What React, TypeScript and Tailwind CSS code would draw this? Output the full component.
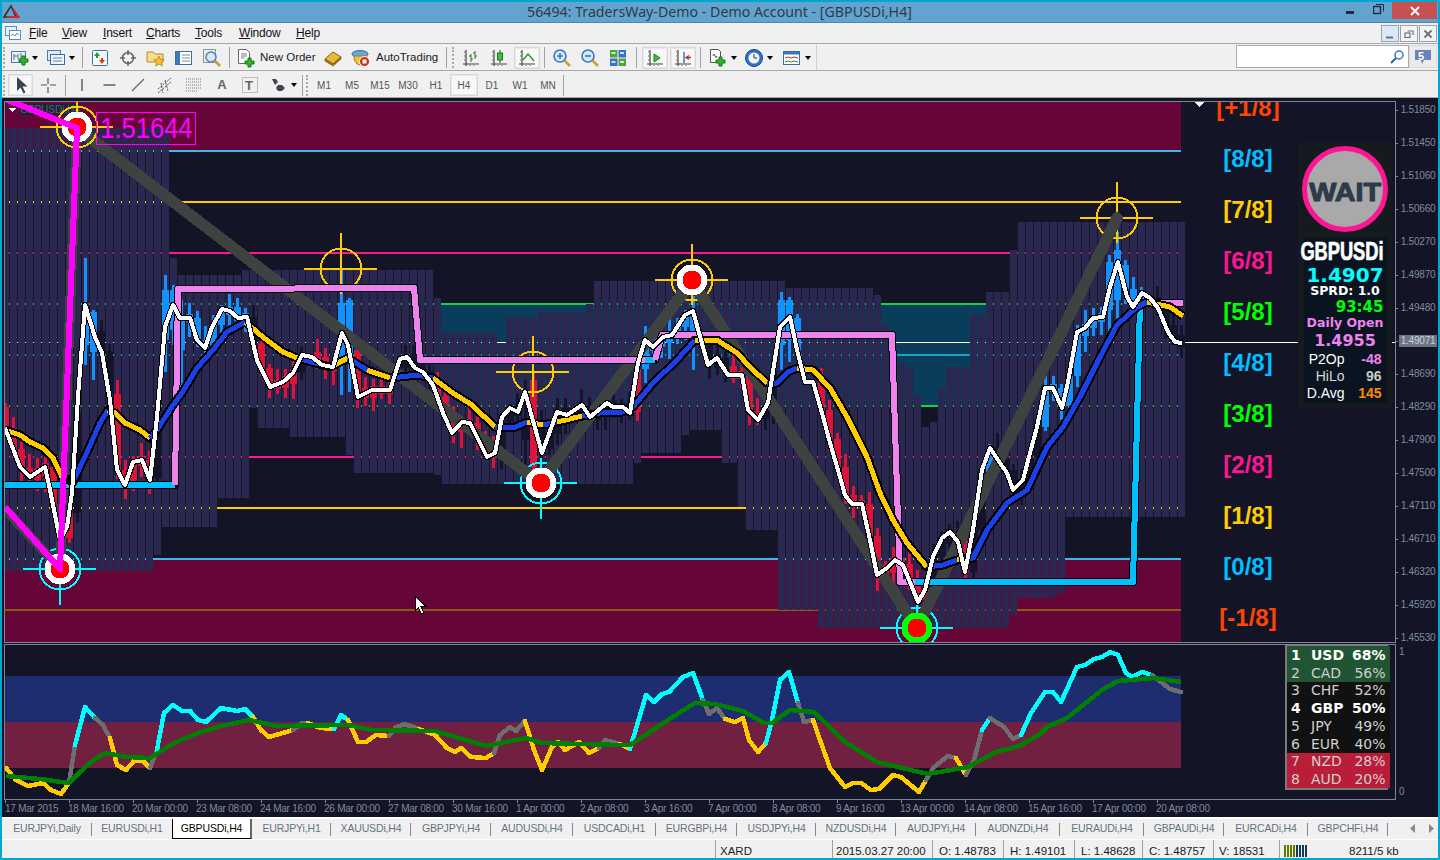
import React from "react";

type Pt = [number, number];
const pts = (a: Pt[]) => a.map((p) => p.join(",")).join(" ");

const WHITE: Pt[] = [[5,428],[20,467],[30,477],[45,467],[50,490],[60,540],[67,527],[72,493],[78,397],[85,305],[95,337],[102,353],[110,400],[117,470],[125,485],[133,462],[142,460],[150,480],[157,417],[165,327],[173,305],[180,318],[190,318],[197,340],[205,348],[212,327],[222,309],[230,311],[238,318],[247,317],[257,360],[270,387],[283,382],[293,373],[302,355],[312,357],[322,365],[333,367],[342,333],[348,345],[358,397],[372,390],[390,390],[400,359],[407,357],[415,368],[423,372],[433,385],[443,413],[452,433],[462,422],[470,423],[480,443],[487,457],[495,453],[502,417],[510,408],[518,412],[525,392],[542,453],[557,412],[567,415],[582,405],[590,417],[607,403],[613,407],[623,407],[630,413],[638,363],[645,340],[653,347],[663,337],[672,335],[685,315],[693,311],[708,365],[717,358],[728,375],[742,375],[748,410],[758,420],[768,403],[780,327],[790,317],[797,350],[805,382],[813,382],[822,413],[830,443],[838,470],[845,495],[852,504],[862,504],[870,540],[877,575],[887,568],[895,560],[903,565],[912,587],[918,602],[925,590],[933,557],[942,538],[950,532],[958,542],[965,572],[973,530],[982,470],[990,448],[1000,463],[1007,473],[1013,490],[1023,480],[1030,453],[1037,427],[1045,388],[1053,388],[1062,408],[1068,382],[1077,332],[1085,328],[1093,318],[1103,317],[1110,287],[1118,262],[1127,297],[1133,307],[1142,293],[1150,298],[1158,308],[1168,332],[1175,342],[1182,343]];

const Y = "#ffcc00", B = "#1a40e8";
const MA: { c: string; p: Pt[] }[] = [
  { c: Y, p: [[5,430],[20,435],[30,442],[43,448],[53,458],[62,477]] },
  { c: B, p: [[73,482],[88,450],[100,423],[108,410]] },
  { c: Y, p: [[108,410],[115,413],[125,423],[140,430],[150,438]] },
  { c: B, p: [[150,438],[157,430],[173,405],[182,393],[197,368],[213,350],[227,332],[245,322]] },
  { c: Y, p: [[245,322],[263,337],[283,352],[297,358]] },
  { c: B, p: [[297,358],[330,367]] },
  { c: Y, p: [[330,367],[348,358]] },
  { c: B, p: [[348,358],[367,370]] },
  { c: Y, p: [[367,370],[390,378]] },
  { c: B, p: [[390,378],[400,377],[417,375],[433,378]] },
  { c: Y, p: [[433,378],[453,393],[472,405],[495,427]] },
  { c: B, p: [[495,427],[513,428],[527,422]] },
  { c: Y, p: [[527,422],[543,425]] },
  { c: B, p: [[543,425],[557,422]] },
  { c: Y, p: [[557,422],[582,416]] },
  { c: B, p: [[582,416],[600,413],[622,412],[633,407],[653,383],[677,360],[695,340]] },
  { c: Y, p: [[695,340],[717,340],[737,353],[750,367],[767,383]] },
  { c: B, p: [[767,383],[777,383],[788,372],[797,368]] },
  { c: Y, p: [[797,368],[813,370],[830,388],[847,417],[867,457],[880,493],[893,520],[907,543],[927,567]] },
  { c: B, p: [[927,567],[943,565],[957,560]] },
  { c: Y, p: [[957,560],[962,559]] },
  { c: B, p: [[962,559],[973,558],[987,530],[1007,503],[1027,490],[1047,447],[1063,427],[1080,397],[1100,357],[1117,325],[1137,307],[1147,302]] },
  { c: Y, p: [[1147,302],[1170,307],[1183,316]] },
];

const PINK = "#ee82ee", CY = "#00bfff";
const STEPS: { c: string; p: Pt[] }[] = [
  { c: CY, p: [[5,485],[175,485]] },
  { c: PINK, p: [[175,485],[178,289],[414,288],[420,360],[655,360]] },
  { c: CY, p: [[645,360],[655,360]] },
  { c: PINK, p: [[655,360],[662,335],[892,335],[900,582],[915,582]] },
  { c: CY, p: [[915,582],[1133,582],[1140,303]] },
  { c: PINK, p: [[1140,303],[1183,303]] },
];

const TOPS: Pt[] = [[169,128],[178,258],[242,275],[433,270],[441,298],[497,332],[505,343],[538,317],[586,312],[594,304],[785,281],[873,288],[881,295],[889,325],[898,345],[905,362],[913,368],[922,395],[930,427],[938,422],[946,388],[970,367],[986,315],[1010,292],[1018,250],[1190,222]];
const BOTS: Pt[] = [[153,571],[161,555],[217,527],[249,498],[258,408],[289,428],[346,437],[353,455],[433,473],[441,475],[633,484],[641,463],[681,453],[689,435],[721,430],[737,463],[746,507],[778,530],[818,610],[1010,628],[1017,615],[1048,598],[1057,597],[1065,593],[1190,517]];
const look = (t: Pt[], c: number) => (t.find((e) => c < e[0]) || t[t.length - 1])[1];

const wAt = (x: number) => {
  for (let i = 1; i < WHITE.length; i++) {
    if (x <= WHITE[i][0]) {
      const [a, b] = WHITE[i - 1], [c, d] = WHITE[i];
      return b + ((x - a) / (c - a)) * (d - b);
    }
  }
  return 343;
};

const R = "#dc143c", U = "#1490ff", D = "#14142a";
const RANGES: [number, number, string][] = [[5,70,R],[71,79,D],[85,100,U],[101,113,D],[114,154,R],[155,163,D],[165,250,U],[253,259,D],[260,296,R],[300,308,D],[310,334,R],[341,350,U],[355,395,R],[400,432,D],[436,498,R],[500,530,D],[533,534,R],[541,566,D],[569,570,R],[575,630,D],[631,637,R],[638,700,U],[705,725,D],[730,760,R],[765,775,D],[778,800,U],[806,807,D],[814,925,R],[926,960,D],[965,966,R],[970,985,D],[989,990,U],[997,1037,D],[1045,1142,U],[1150,1182,D]];
const OVER: Record<number, [number, number, number, number]> = {
  85: [258,365,308,345], 93: [310,380,312,352], 165: [275,372,290,340], 173: [285,345,290,330], 181: [300,390,320,350],
  341: [268,395,303,365], 349: [298,392,300,360], 533: [372,480,380,467], 525: [380,470,420,440],
  693: [296,370,315,340], 781: [292,370,300,345], 789: [297,362,300,340], 1117: [232,330,250,300], 1109: [255,345,262,310],
};

const candles = () => {
  const out: React.ReactNode[] = [];
  for (let i = 0; i < 148; i++) {
    const c = 5 + 8 * i;
    if (c > 1182) break;
    const r = RANGES.find((e) => c >= e[0] && c <= e[1]);
    if (!r) continue;
    const a = wAt(c), b = wAt(c - 8);
    let t = Math.min(a, b), m = Math.max(a, b);
    if (m - t < 8) { t -= 4; m += 4; }
    let h = t - 4 - ((i * 7) % 11), l = m + 4 + ((i * 5) % 13);
    const o = OVER[c];
    if (o) { h = o[0]; l = o[1]; t = o[2]; m = o[3]; }
    out.push(
      <g key={c} fill={r[2]}>
        <rect x={c - 1} y={h} width={3} height={l - h} />
        <rect x={c - 3} y={t} width={7} height={m - t} />
      </g>
    );
  }
  return out;
};

const clouds = () => {
  const out: React.ReactNode[] = [];
  for (let i = 0; i < 148; i++) {
    const c = 5 + 8 * i;
    if (c > 1182) break;
    const t = look(TOPS, c), b = look(BOTS, c);
    out.push(<rect key={c} x={c - 3} y={t} width={7} height={b - t} fill="#2a2850" />);
  }
  return out;
};

function Ring({ x, y, c }: { x: number; y: number; c: string }) {
  const up = c === "#ffcc00";
  return (
    <g stroke={c} fill="none" strokeWidth={2}>
      <circle cx={x} cy={y} r={20.5} />
      <line x1={x - 37} y1={y} x2={x + 36} y2={y} />
      <line x1={x} y1={up ? y - 36 : y - 25} x2={x} y2={up ? y + 25 : y + 36} />
    </g>
  );
}
function Ball({ x, y, c = "#ffffff" }: { x: number; y: number; c?: string }) {
  return (
    <g>
      <circle cx={x} cy={y} r={15.5} fill={c} />
      <circle cx={x} cy={y} r={9.5} fill="#ff0000" />
    </g>
  );
}

const LEVELS: [number, string, number][] = [[151,"#3db8e8",2],[202,"#ffcc00",2],[253,"#ff1493",2],[304,"#17d43a",2],[343,"#ffffff",1],[355,"#1f9fc0",2],[406,"#17d43a",2],[457,"#ff1493",2],[508,"#ffcc00",2],[559,"#3db8e8",2],[610,"#8f5a10",2]];

function MainChart() {
  return (
    <svg width={1390} height={540} viewBox="5 102 1390 540" shapeRendering="crispEdges" className="block">
      <rect x={5} y={102} width={1176} height={49} fill="#650538" />
      <rect x={5} y={559} width={1176} height={83} fill="#650538" />
      <rect x={441} y={304} width={545} height={102} fill="#0a3d5c" />
      {LEVELS.map(([y, c, h]) => (
        <rect key={y} x={5} y={y - 1} width={1176} height={h} fill={c} />
      ))}
      <rect x={1181} y={342} width={214} height={1} fill="#ffffff" />
      {clouds()}
      {candles()}
      <Ring x={341} y={269} c="#ffcc00" />
      <Ring x={533} y={372} c="#ffcc00" />
      <Ring x={692} y={280} c="#ffcc00" />
      <Ring x={1117} y={218} c="#ffcc00" />
      <Ring x={541} y={483} c="#00ffff" />
      <Ring x={60} y={569} c="#00ffff" />
      <Ring x={917} y={628} c="#00ffff" />
      <polyline points={pts([[5,509],[60,569],[77,128]])} fill="none" stroke="#3e4240" strokeWidth={10} />
      <polyline points={pts([[77,128],[540,483],[692,281],[917,628],[1117,218]])} fill="none" stroke="#3e4240" strokeWidth={11.5} strokeLinejoin="round" strokeLinecap="round" />
      <polyline points={pts(STEPS.flatMap((s) => s.p))} fill="none" stroke="#000" strokeWidth={8} strokeLinejoin="round" />
      {STEPS.map((s, i) => (
        <polyline key={i} points={pts(s.p)} fill="none" stroke={s.c} strokeWidth={6} strokeLinejoin="round" />
      ))}
      <polyline points={pts(MA.flatMap((s) => s.p))} fill="none" stroke="#000" strokeWidth={9} strokeLinejoin="round" />
      {MA.map((s, i) => (
        <polyline key={i} points={pts(s.p)} fill="none" stroke={s.c} strokeWidth={5} strokeLinejoin="round" />
      ))}
      <polyline points={pts(WHITE)} fill="none" stroke="#000" strokeWidth={6} strokeLinejoin="round" />
      <polyline points={pts(WHITE)} fill="none" stroke="#fff" strokeWidth={4} strokeLinejoin="round" />
      <Ball x={692} y={280} />
      <Ball x={541} y={483} />
      <Ball x={917} y={628} c="#00ff00" />
      <polygon points="1195,102 1204,102 1199.5,107" fill="#fff" />
      <polygon points="8,108 16,108 12,112" fill="#fff" />
      <path d="M415 596 v15 l3.5 -3.5 l3 6.5 l2.5 -1 l-3 -6.5 h5 z" fill="#fff" stroke="#000" strokeWidth={1} />
    </svg>
  );
}

function ChartOverlay() {
  return (
    <svg width={1390} height={540} viewBox="5 102 1390 540" shapeRendering="crispEdges" className="absolute left-0 top-0 pointer-events-none">
      <Ring x={77} y={127} c="#ffcc00" />
      <Ball x={77} y={127} />
      <Ball x={60} y={569} />
      <polyline points={pts([[5,99],[77,128],[60,569],[5,507]])} fill="none" stroke="#ff00ff" strokeWidth={6} strokeLinejoin="round" />
    </svg>
  );
}

const OSC: { c: string; p: Pt[] }[] = [
  { c: Y, p: [[6,768],[16,780],[28,786],[43,783],[51,790],[61,794],[69,783]] },
  { c: "#6e6e6e", p: [[69,783],[75,745]] },
  { c: "#00ffff", p: [[75,745],[85,707],[95,718]] },
  { c: "#6e6e6e", p: [[95,718],[103,725],[110,738]] },
  { c: Y, p: [[110,738],[117,765],[126,770],[134,761],[143,761],[150,768]] },
  { c: "#6e6e6e", p: [[150,768],[157,750]] },
  { c: "#00ffff", p: [[157,750],[164,713],[173,705],[182,711],[190,711],[198,720],[206,722],[221,708],[237,711],[245,709],[253,717]] },
  { c: Y, p: [[253,717],[261,730],[269,737],[293,730]] },
  { c: "#6e6e6e", p: [[293,730],[302,723],[308,723]] },
  { c: Y, p: [[308,723],[320,728],[334,729]] },
  { c: "#00ffff", p: [[334,729],[341,715],[348,720]] },
  { c: Y, p: [[348,720],[358,742],[366,742],[376,735],[389,736]] },
  { c: "#6e6e6e", p: [[389,736],[395,728],[404,724],[419,729]] },
  { c: Y, p: [[419,729],[435,735],[447,748],[455,752],[461,748],[471,757],[486,758],[494,753]] },
  { c: "#6e6e6e", p: [[494,753],[500,735],[510,727],[516,731],[525,721]] },
  { c: Y, p: [[525,721],[534,750],[542,770],[552,747],[558,742],[565,750],[579,742],[589,753],[599,748]] },
  { c: "#6e6e6e", p: [[599,748],[605,740],[620,744]] },
  { c: Y, p: [[620,744],[630,749]] },
  { c: "#00ffff", p: [[630,749],[646,695],[654,702],[662,694],[669,692],[683,677],[693,673],[703,700]] },
  { c: "#6e6e6e", p: [[703,700],[709,714],[717,708],[725,719]] },
  { c: Y, p: [[725,719],[735,722],[743,718],[749,740],[758,752],[766,743]] },
  { c: "#00ffff", p: [[766,743],[772,720],[780,680],[789,672],[798,703]] },
  { c: "#6e6e6e", p: [[798,703],[804,722],[813,720]] },
  { c: Y, p: [[813,720],[820,740],[830,768],[845,787],[853,783],[861,783],[871,790],[879,789],[893,775],[901,777],[919,792],[926,780]] },
  { c: "#6e6e6e", p: [[926,780],[934,767],[948,756],[956,758]] },
  { c: Y, p: [[956,758],[966,775]] },
  { c: "#6e6e6e", p: [[966,775],[974,760],[982,730]] },
  { c: "#00ffff", p: [[982,730],[990,718]] },
  { c: "#6e6e6e", p: [[990,718],[1004,727],[1013,739],[1021,735]] },
  { c: "#00ffff", p: [[1021,735],[1031,713],[1045,692],[1053,692],[1061,702],[1077,667],[1085,665],[1094,659],[1102,657],[1110,652],[1118,655],[1126,673],[1132,677],[1142,672],[1152,675]] },
  { c: "#6e6e6e", p: [[1152,675],[1170,689],[1181,692]] },
];
const GREEN: Pt[] = [[6,776],[40,779],[69,783],[79,773],[91,762],[105,753],[127,757],[150,758],[174,743],[198,733],[221,726],[249,720],[277,726],[348,725],[372,730],[435,731],[486,746],[526,738],[542,743],[620,745],[630,745],[671,718],[695,703],[715,704],[743,711],[764,723],[772,723],[790,710],[814,712],[845,742],[877,762],[928,774],[968,767],[996,752],[1019,746],[1039,735],[1047,727],[1067,718],[1102,690],[1118,681],[1154,678],[1181,682]];

function SubChart() {
  return (
    <svg width={1390} height={154} viewBox="5 645 1390 154" shapeRendering="crispEdges" className="block">
      <rect x={5} y={676} width={1176} height={46} fill="#1e2c70" />
      <rect x={5} y={722} width={1176} height={46} fill="#722042" />
      {OSC.map((s, i) => (
        <polyline key={i} points={pts(s.p)} fill="none" stroke={s.c} strokeWidth={4.5} strokeLinejoin="round" strokeLinecap="round" />
      ))}
      <polyline points={pts(GREEN)} fill="none" stroke="#008000" strokeWidth={4.5} strokeLinejoin="round" />
    </svg>
  );
}

/* ---------- toolbar icons ---------- */
const Ic = ({ children, w = 20, h = 20 }: { children: React.ReactNode; w?: number; h?: number }) => (
  <svg width={w} height={h} viewBox={`0 0 ${w} ${h}`} fill="none" className="block">{children}</svg>
);
const Plus = ({ x = 8, y = 8 }: { x?: number; y?: number }) => (
  <path d={`M${x + 3} ${y} h3 v3 h3 v3 h-3 v3 h-3 v-3 h-3 v-3 h3 z`} fill="#2fb52f" stroke="#117a11" strokeWidth="1" />
);
const NewChartIcon = () => (
  <Ic><rect x="1.5" y="3.5" width="14" height="11" fill="#eaf2fb" stroke="#4a7ab8" /><path d="M4 6v6M4 8h3M8 6v5M11 5v6" stroke="#667" /><Plus x={9} y={8} /></Ic>
);
const ProfilesIcon = () => (
  <Ic><rect x="1.5" y="2.5" width="13" height="10" fill="#dfeaf6" stroke="#4a7ab8" /><rect x="4.5" y="6.5" width="14" height="10" fill="#eef4fb" stroke="#3c6ca8" /><path d="M7 10h9M7 13h9" stroke="#6688aa" /></Ic>
);
const WatchIcon = () => (
  <Ic><rect x="2.5" y="2.5" width="15" height="15" rx="1" fill="#f3f8fd" stroke="#3f6ea8" /><path d="M7 4l3 4H8v2H6V8H4z" fill="#2a9a2a" /><path d="M12 16l-3-4h2v-2h2v2h2z" fill="#d84020" /></Ic>
);
const NavIcon = () => (
  <Ic><circle cx="10" cy="10" r="5.5" stroke="#666" strokeWidth="1.5" /><path d="M10 2v5M10 13v5M2 10h5M13 10h5" stroke="#666" strokeWidth="1.5" /></Ic>
);
const FolderStar = () => (
  <Ic><path d="M1 4h6l2 2h8v8H1z" fill="#f6dc8c" stroke="#b28a2a" /><path d="M13 8l1.6 3.4 3.6.4-2.7 2.5.8 3.7-3.3-1.9-3.3 1.9.8-3.7-2.7-2.5 3.6-.4z" fill="#f5c22d" stroke="#a87a10" strokeWidth=".7" /></Ic>
);
const TermIcon = () => (
  <Ic><rect x="1.5" y="3.5" width="16" height="13" fill="#fff" stroke="#3c6ca8" /><rect x="2" y="4" width="4" height="12" fill="#3c78c0" /><path d="M8 7h8M8 10h8M8 13h8" stroke="#7a8a9a" /></Ic>
);
const TesterIcon = () => (
  <Ic><rect x="1.5" y="1.5" width="12" height="13" fill="#e8ecf0" stroke="#8a97a5" /><circle cx="9" cy="9" r="5" fill="#d6e8f8" stroke="#5a7fa5" strokeWidth="1.5" /><path d="M13 13l5 5" stroke="#c89a2a" strokeWidth="2.5" /></Ic>
);
const OrderIcon = () => (
  <Ic><path d="M2.5 1.5h8l3 3v11h-11z" fill="#fff" stroke="#667" /><path d="M5 6h6M5 8h6M5 10h3" stroke="#778" /><Plus x={9} y={10} /></Ic>
);
const BookIcon = () => (
  <Ic><path d="M2 11l8-7 8 5-8 7z" fill="#e8b93a" stroke="#8a5e10" /><path d="M2 11v2l8 5 8-7V9l-8 7z" fill="#a8741a" stroke="#7a500c" strokeWidth=".7" /></Ic>
);
const AutoIcon = () => (
  <Ic><ellipse cx="9" cy="6" rx="8" ry="3.5" fill="#69a8d8" stroke="#2f6ea8" /><path d="M3 8c0 6 3 9 7 9s6-3 6-9z" fill="#efc13d" stroke="#a87a10" /><circle cx="13.5" cy="13.5" r="5" fill="#d12d1d" stroke="#fff" /><rect x="11.5" y="11.5" width="4" height="4" fill="#fff" /></Ic>
);
const AxisBase = ({ children }: { children: React.ReactNode }) => (
  <Ic><path d="M5 2v16M2 16h16" stroke="#444" strokeWidth="1.2" /><path d="M3 4h1M3 8h1M3 12h1M9 17v1M13 17v1" stroke="#666" />{children}</Ic>
);
const BarsIcon = () => (<AxisBase><path d="M10 14V6M8 8h2M10 11h2M14 11V3M12 5h2M14 8h2" stroke="#2a7a2a" /></AxisBase>);
const CandleIcon = () => (<AxisBase><path d="M11 2v13" stroke="#333" /><rect x="8.5" y="5" width="5" height="7" fill="#3fc03f" stroke="#1a7a1a" /></AxisBase>);
const LineIcon = () => (<AxisBase><path d="M6 12l5-6 6 7" stroke="#2a8a2a" strokeWidth="1.3" /></AxisBase>);
const ScrollIcon = () => (<AxisBase><path d="M9 6l6 4-6 4z" fill="#3fc03f" stroke="#1a7a1a" /></AxisBase>);
const ShiftIcon = () => (<AxisBase><path d="M11 4v11" stroke="#3c78c0" strokeWidth="1.5" /><path d="M18 9.5h-4M16 7.5l-3 2 3 2" stroke="#c03020" strokeWidth="1.3" /></AxisBase>);
const ZoomIcon = ({ minus = false }: { minus?: boolean }) => (
  <Ic><circle cx="8" cy="8" r="6" fill="#d6e8f8" stroke="#3a78b8" strokeWidth="1.6" /><path d={minus ? "M5 8h6" : "M5 8h6M8 5v6"} stroke="#3a78b8" strokeWidth="1.6" /><path d="M12.5 12.5l5.5 5.5" stroke="#d0a030" strokeWidth="2.6" /></Ic>
);
const TileIcon = () => (
  <Ic><rect x="2" y="2" width="7.5" height="7.5" fill="#4aa83a" /><rect x="10.5" y="2" width="7.5" height="7.5" fill="#3a70c8" /><rect x="2" y="10.5" width="7.5" height="7.5" fill="#3a70c8" /><rect x="10.5" y="10.5" width="7.5" height="7.5" fill="#4aa83a" /><path d="M3.5 5h4M12 5h4M3.5 14h4M12 14h4" stroke="#fff" strokeWidth="1.4" /></Ic>
);
const IndicatorIcon = () => (
  <Ic><path d="M2.5 1.5h8l2 2v11h-10z" fill="#fff" stroke="#555" /><path d="M5 8q1-4 2 0t2 0" stroke="#555" /><Plus x={8} y={9} /></Ic>
);
const ClockIcon = () => (
  <Ic><circle cx="10" cy="10" r="8.5" fill="#2a74c8" stroke="#12488a" /><circle cx="10" cy="10" r="5.5" fill="#f2f2f2" /><path d="M10 6v4h3" stroke="#333" /></Ic>
);
const TemplateIcon = () => (
  <Ic><rect x="1.5" y="3.5" width="16" height="13" fill="#fff" stroke="#3c6ca8" /><rect x="2" y="4" width="15" height="2.5" fill="#3c78c0" /><path d="M3 10l3-1 3 1 3-1 4 1" stroke="#c03020" /><path d="M3 14l3-1 3 1 3-1 4 1" stroke="#2a9a2a" /></Ic>
);
const Caret = () => <span className="block w-0 h-0 border-l-[3.5px] border-r-[3.5px] border-t-[4px] border-l-transparent border-r-transparent border-t-black" />;
const Sep = () => <span className="block w-px h-[21px] bg-[#a0a0a0]" />;
const Grip = () => <span className="block shrink-0 w-[2px] h-[21px] border-l-2 border-dotted border-[#a8a8a8]" />;

const CursorIcon = () => (
  <Ic><path d="M6 2l0 14 3.5-3.5 3 6 2-1-3-6h5z" fill="#3a4450" /></Ic>
);
const CrossIcon = () => (
  <Ic><path d="M10 3v6M10 12v6M3 10h6M12 10h6" stroke="#555" strokeWidth="1.2" /></Ic>
);
const VIcon = () => (<Ic><path d="M10 4v12" stroke="#555" strokeWidth="1.4" /></Ic>);
const HIcon = () => (<Ic><path d="M3.5 10h12" stroke="#555" strokeWidth="1.4" /></Ic>);
const TIcon = () => (<Ic><path d="M4 16L16 4" stroke="#666" strokeWidth="1.2" /></Ic>);
const ChannelIcon = () => (
  <Ic><path d="M2 14L15 3M2 18L15 7M5 8l2 10M9 5l3 11" stroke="#555" strokeWidth="1" strokeDasharray="2 1" /></Ic>
);
const FibIcon = () => (
  <Ic><path d="M2 4h15M2 7h15M2 10h15M2 13h15M2 16h11" stroke="#777" strokeDasharray="1 1" /></Ic>
);
const TextBoxIcon = () => (
  <Ic><rect x="2.5" y="2.5" width="15" height="15" stroke="#888" strokeDasharray="1 1" /></Ic>
);
const ArrowsIcon = () => (
  <Ic><path d="M4 4h4l2 3-3 3zM10 10h4l3 3-3 3h-4l-2-3z" fill="#445" /></Ic>
);

function Btn({ children, cls = "w-[28px]", on = false }: { children: React.ReactNode; cls?: string; on?: boolean }) {
  return (
    <div className={`flex items-center justify-center h-[22px] shrink-0 ${cls} ${on ? "border border-[#d8d8d8] bg-[#f8f8f8] shadow-[inset_0_0_0_1px_#e8e8e8]" : ""}`}>
      {children}
    </div>
  );
}

function TitleBar() {
  return (
    <div className="relative h-[20px] shrink-0 bg-[#62a4cf] flex items-center justify-center">
      <svg width="18" height="16" viewBox="0 0 18 16" className="absolute left-[1px] top-[2px]">
        <path d="M8 2L1 13h12z" fill="none" stroke="#333" strokeWidth="1.6" />
        <path d="M10 5l5.5 8H4" fill="none" stroke="#d8232a" strokeWidth="2" />
      </svg>
      <span className="font-['Noto_Sans'] text-[14.2px] text-[#2f3b45] leading-none mr-[1px]">56494: TradersWay-Demo - Demo Account - [GBPUSDi,H4]</span>
      <span className="absolute left-[1344px] top-[9px] block w-[8px] h-[3px] bg-[#1c2c38]" />
      <svg width="11" height="11" viewBox="0 0 11 11" className="absolute left-[1371px] top-[2px]" fill="none" stroke="#1c2c38">
        <rect x="0.5" y="2.5" width="7" height="7" strokeWidth="1.4" /><path d="M3 0.5h7.5v7" />
      </svg>
      <div className="absolute left-[1390px] top-0 h-[17px] w-[45px] bg-[#c75050] flex items-center justify-center">
        <svg width="10" height="10" viewBox="0 0 10 10"><path d="M1 1l8 8M9 1l-8 8" stroke="#fff" strokeWidth="1.8" /></svg>
      </div>
    </div>
  );
}

const MENU = [
  ["F", "ile", "w-[33px]"],
  ["V", "iew", "w-[41px]"],
  ["I", "nsert", "w-[43px]"],
  ["C", "harts", "w-[49px]"],
  ["T", "ools", "w-[44px]"],
  ["W", "indow", "w-[57px]"],
  ["H", "elp", "w-[40px]"],
];

function MenuBar() {
  return (
    <div className="relative h-[22px] shrink-0 bg-[#f0f0f0] border-t border-[#4d87a8] border-b border-b-[#a8a8a8] flex items-center">
      <svg width="16" height="16" viewBox="0 0 16 16" className="ml-[3px] mr-[8px]">
        <rect x="0.5" y="1.5" width="11" height="9" fill="#eaf2fb" stroke="#5c8cc8" />
        <rect x="4.5" y="5.5" width="11" height="9" fill="#fff" stroke="#5c8cc8" />
        <path d="M6 11l2-2 2 2 2-3 2 2" stroke="#5c8cc8" fill="none" />
      </svg>
      {MENU.map(([a, b, w]) => (
        <span key={a} className={`${w} text-[12px] text-[#111] tracking-[-0.2px]`}><u>{a}</u>{b}</span>
      ))}
      <div className="absolute right-[1px] top-[2px] flex gap-px">
        {["min", "res", "cls"].map((k) => (
          <div key={k} className={`w-[18px] h-[17px] border border-[#96a4b2] flex items-center justify-center ${k === "min" ? "bg-[#dbe8f6]" : "bg-[#f4f4f4]"}`}>
            <svg width="10" height="10" viewBox="0 0 10 10" fill="none" stroke="#66727e" strokeWidth="1.6">
              {k === "min" && <path d="M1 8.5h7" strokeWidth="2" />}
              {k === "res" && <g strokeWidth="1.2"><rect x="1" y="4" width="5" height="4.5" /><path d="M3.5 2h5.5v4" /></g>}
              {k === "cls" && <path d="M1.5 1.5l7 7M8.5 1.5l-7 7" strokeWidth="1.8" />}
            </svg>
          </div>
        ))}
      </div>
    </div>
  );
}

function Row1() {
  return (
    <div className="relative h-[27px] shrink-0 bg-[#f0f0f0] border-b border-[#a8a8a8] flex items-center pl-[1px] pt-[1px]">
      <Grip />
      <Btn cls="w-[20px] ml-[5px]"><NewChartIcon /></Btn>
      <Btn cls="w-[10px]"><Caret /></Btn>
      <Btn cls="w-[20px] ml-[6px]"><ProfilesIcon /></Btn>
      <Btn cls="w-[12px]"><Caret /></Btn>
      <Btn cls="w-[8px]"><Sep /></Btn>
      <Btn><WatchIcon /></Btn>
      <Btn><NavIcon /></Btn>
      <Btn><FolderStar /></Btn>
      <Btn><TermIcon /></Btn>
      <Btn><TesterIcon /></Btn>
      <Btn cls="w-[7px]"><Sep /></Btn>
      <Btn cls="w-[24px] ml-[1px]"><OrderIcon /></Btn>
      <span className="w-[57px] ml-[2px] shrink-0 text-[11.5px] text-[#222] whitespace-nowrap">New Order</span>
      <Btn cls="w-[28px] ml-[2px]"><BookIcon /></Btn>
      <Btn cls="w-[28px]"><AutoIcon /></Btn>
      <span className="w-[66px] ml-[1px] shrink-0 text-[11.5px] text-[#222] whitespace-nowrap">AutoTrading</span>
      <Btn cls="w-[8px]"><Sep /></Btn>
      <span className="ml-[2px]"><Grip /></span>
      <Btn cls="w-[28px] ml-[3px]"><BarsIcon /></Btn>
      <Btn><CandleIcon /></Btn>
      <Btn on cls="w-[26px] ml-[1px]"><LineIcon /></Btn>
      <Btn cls="w-[8px]"><Sep /></Btn>
      <Btn><ZoomIcon /></Btn>
      <Btn><ZoomIcon minus /></Btn>
      <Btn><TileIcon /></Btn>
      <Btn cls="w-[9px]"><Sep /></Btn>
      <Btn on cls="w-[26px] ml-[1px]"><ScrollIcon /></Btn>
      <Btn on cls="w-[26px] ml-[2px]"><ShiftIcon /></Btn>
      <Btn cls="w-[8px]"><Sep /></Btn>
      <Btn cls="w-[24px] ml-[2px]"><IndicatorIcon /></Btn>
      <Btn cls="w-[8px]"><Caret /></Btn>
      <Btn cls="w-[24px] ml-[4px]"><ClockIcon /></Btn>
      <Btn cls="w-[8px]"><Caret /></Btn>
      <Btn cls="w-[24px] ml-[6px]"><TemplateIcon /></Btn>
      <Btn cls="w-[8px]"><Caret /></Btn>
      <span className="block w-px h-[25px] bg-[#d0d0d0] ml-[4px]" />
      <div className="absolute left-[1234px] top-[1px] w-[173px] h-[23px] bg-white border border-[#acacac] flex items-center justify-end pr-[4px]">
        <svg width="14" height="14" viewBox="0 0 14 14" fill="none"><circle cx="9" cy="5" r="4" stroke="#3a72c8" strokeWidth="1.5" /><path d="M6 8l-5 5" stroke="#2a5cb0" strokeWidth="2" /></svg>
      </div>
      <div className="absolute left-[1407px] top-[1px] w-[28px] h-[23px] bg-[#ebebeb] border border-[#dcdcdc] flex items-center justify-center">
        <svg width="18" height="18" viewBox="0 0 18 18"><path d="M1 2h16v10H10l-2 4-1-4H1z" fill="#6684b4" /></svg>
        <span className="absolute left-[8px] top-[3px] text-[11px] font-bold text-white leading-[14px]">5</span>
      </div>
    </div>
  );
}

const TF = ["M1", "M5", "M15", "M30", "H1", "H4", "D1", "W1", "MN"];
function Row2() {
  return (
    <div className="h-[27px] shrink-0 bg-[#f0f0f0] border-b border-[#a8a8a8] flex items-center pl-[1px] pt-[2px]">
      <Grip />
      <Btn on cls="w-[25px] ml-[3px]"><CursorIcon /></Btn>
      <Btn cls="w-[28px] ml-[1px]"><CrossIcon /></Btn>
      <Btn cls="w-[6px]"><Sep /></Btn>
      <Btn><VIcon /></Btn>
      <Btn><HIcon /></Btn>
      <Btn><TIcon /></Btn>
      <Btn><ChannelIcon /></Btn>
      <Btn><FibIcon /></Btn>
      <Btn><span className="text-[13px] text-[#666] font-bold">A</span></Btn>
      <Btn><div className="relative"><TextBoxIcon /><span className="absolute left-[5px] top-[1px] text-[13px] font-bold text-[#666]">T</span></div></Btn>
      <Btn cls="w-[24px] ml-[2px]"><ArrowsIcon /></Btn>
      <Btn cls="w-[8px]"><Caret /></Btn>
      <Btn cls="w-[8px]"><Sep /></Btn>
      <Grip />
      <div className="flex ml-[2px] items-center">
        {TF.map((t) => (
          <Btn key={t} on={t === "H4"}>
            <span className="text-[10px] text-[#555]">{t}</span>
          </Btn>
        ))}
      </div>
      <Btn cls="w-[2px]"><Sep /></Btn>
    </div>
  );
}

const PRICES = ["1.51850","1.51450","1.51060","1.50660","1.50270","1.49870","1.49480","1.49071","1.48690","1.48290","1.47900","1.47500","1.47110","1.46710","1.46320","1.45920","1.45530"];
const GANN: [string, string][] = [["[+1/8]","text-[#ff4500]"],["[8/8]","text-[#00bfff]"],["[7/8]","text-[#ffcc00]"],["[6/8]","text-[#ff1493]"],["[5/8]","text-[#00ff00]"],["[4/8]","text-[#00bfff]"],["[3/8]","text-[#00ff00]"],["[2/8]","text-[#ff1493]"],["[1/8]","text-[#ffcc00]"],["[0/8]","text-[#00bfff]"],["[-1/8]","text-[#ff4500]"]];

function InfoPanel() {
  const dj = "font-['DejaVu_Sans'] font-bold";
  return (
    <div className="absolute left-[1293px] top-[40px] w-[94px] h-[266px] bg-[#141a1e] flex flex-col items-center">
      <div className="mt-[4px] w-[86px] h-[86px] rounded-full border-[5px] border-[#ff1493] bg-[#a9a9a9] flex items-center justify-center pt-[7px]">
        <span className="font-['Liberation_Sans'] font-bold text-[25px] scale-x-[1.15] text-[#2c3a4a] leading-none [-webkit-text-stroke:1px_#2c3a4a]">WAIT</span>
      </div>
      <div className="mt-[6px] w-[83px] h-[165px] bg-[#0a1420] flex flex-col items-center">
        <div className="h-[26px] mr-[6px] flex items-center font-bold text-[25px] text-white scale-x-[0.73] leading-none whitespace-nowrap [-webkit-text-stroke:0.7px_white]">GBPUSDi</div>
        <div className={`h-[21px] flex items-center ${dj} text-[20px] text-[#00ffff] leading-none`}>1.4907</div>
        <div className={`h-[13px] flex items-center ${dj} text-[12.5px] text-white leading-none whitespace-nowrap`}>SPRD: 1.0</div>
        <div className={`h-[19px] w-full flex items-center justify-end pr-[3px] ${dj} text-[15px] text-[#00ff00] leading-none`}>93:45</div>
        <div className={`h-[13px] flex items-center ${dj} text-[12.5px] text-[#ee82ee] leading-none whitespace-nowrap`}>Daily Open</div>
        <div className={`h-[21px] flex items-center ${dj} text-[16px] text-[#ee82ee] leading-none`}>1.4955</div>
        <div className="h-[15px] w-full grid grid-cols-[41px_37px] items-center text-[14px] leading-none"><span className="text-right text-white">P2Op</span><span className="text-right font-bold text-[#ee82ee]">-48</span></div>
        <div className="h-[19px] w-full grid grid-cols-[41px_37px] items-center text-[14px] leading-none"><span className="text-right text-[#d8d8d8]">HiLo</span><span className="text-right font-bold text-[#c8c8c8]">96</span></div>
        <div className="h-[16px] w-full grid grid-cols-[41px_37px] items-center text-[14px] leading-none"><span className="text-right text-white">D.Avg</span><span className="text-right font-bold text-[#ff8c00]">145</span></div>
      </div>
    </div>
  );
}

const CUR: [string, string, string, boolean, string][] = [
  ["1","USD","68%",true,"bg-[#215432]"],["2","CAD","56%",false,"bg-[#215432]"],["3","CHF","52%",false,"bg-[#111111]"],["4","GBP","50%",true,"bg-[#111111]"],
  ["5","JPY","49%",false,"bg-[#111111]"],["6","EUR","40%",false,"bg-[#111111]"],["7","NZD","28%",false,"bg-[#b91d37]"],["8","AUD","20%",false,"bg-[#b91d37]"],
];
const TIMES = ["17 Mar 2015","18 Mar 16:00","20 Mar 00:00","23 Mar 08:00","24 Mar 16:00","26 Mar 00:00","27 Mar 08:00","30 Mar 16:00","1 Apr 00:00","2 Apr 08:00","3 Apr 16:00","7 Apr 00:00","8 Apr 08:00","9 Apr 16:00","13 Apr 00:00","14 Apr 08:00","15 Apr 16:00","17 Apr 00:00","20 Apr 08:00"];

function Chart() {
  return (
    <div className="h-[719px] shrink-0 bg-[#131426] pt-[3px] pl-[2px] flex flex-col">
      <div className="flex h-[542px] shrink-0">
        <div className="relative w-[1392px] h-[542px] border border-[#7c8696] overflow-hidden">
          <MainChart />
          <div className="absolute left-[14px] top-[2px] h-[11px] bg-[#1d2236] text-[10px] leading-[11px] text-[#586276] px-[1px] whitespace-nowrap">GBPUSDi,H4</div>
          <ChartOverlay />
          <div className="absolute left-[91px] top-[10px] w-[100px] h-[33px] border border-[#ff00ff] flex items-center justify-center overflow-hidden">
            <span className="text-[29px] text-[#ff00ff] leading-none scale-x-[0.88] whitespace-nowrap">1.51644</span>
          </div>
          <div className="absolute left-[1193px] top-[-20px] w-[100px] flex flex-col items-center">
            {GANN.map(([t, c]) => (
              <div key={t} className={`h-[51px] flex items-center font-bold text-[24px] leading-none ${c}`}>{t}</div>
            ))}
          </div>
          <InfoPanel />
        </div>
        <div className="pt-[1px] flex flex-col gap-[17px] flex-1 relative">
          {PRICES.map((p) => (
            <div key={p} className="flex items-center h-[16px] shrink-0">
              <span className="block w-[2px] h-px bg-[#7c8696] mr-[1px]" />
              <span className={`text-[10px] leading-[12px] tracking-[-0.2px] w-[38px] text-center ${p === "1.49071" ? "bg-[#6b7684] text-[#c8d0d8]" : "text-[#7f8b9b]"}`}>{p}</span>
            </div>
          ))}
        </div>
      </div>
      <div className="flex h-[156px] mt-px shrink-0">
        <div className="relative w-[1392px] h-[156px] border border-[#7c8696] overflow-hidden">
          <SubChart />
          <div className="absolute left-[1280px] top-[-1px] w-[103px] h-[146px] border-2 border-[#7a7a7a] grid grid-rows-8 font-['DejaVu_Sans'] text-[14px] leading-none">
            {CUR.map(([n, s, p, b, bg]) => (
              <div key={n} className={`${bg} grid grid-cols-[20px_41px_1fr] items-center pl-[4px] pr-[4px] ${b ? "font-bold text-white" : "text-[#cfcfcf]"}`}>
                <span>{n}</span><span>{s}</span><span className="text-right">{p}</span>
              </div>
            ))}
          </div>
        </div>
        <div className="flex flex-col justify-between text-[10px] leading-[12px] text-[#7f8b9b] pl-[3px] py-[2px]"><span>1</span><span>0</span></div>
      </div>
      <div className="flex h-[17px] pl-[1px]">
        {TIMES.map((t, i) => (
          <div key={t} className="w-[64px] shrink-0 flex flex-col">
            <span className="block w-px h-[3px] bg-[#7c8696]" />
            <span className={`text-[10px] leading-[11px] text-[#7f8b9b] whitespace-nowrap tracking-[-0.25px] ${i === 0 ? "" : "-ml-[1px]"}`}>{t}</span>
          </div>
        ))}
      </div>
    </div>
  );
}

const TABS: [string, string][] = [["EURJPYi,Daily","w-[90px]"],["EURUSDi,H1","w-[80px]"],["GBPUSDi,H4","w-[80px]"],["EURJPYi,H1","w-[79px]"],["XAUUSDi,H4","w-[80px]"],["GBPJPYi,H4","w-[80px]"],["AUDUSDi,H4","w-[82px]"],["USDCADi,H1","w-[83px]"],["EURGBPi,H4","w-[81px]"],["USDJPYi,H4","w-[79px]"],["NZDUSDi,H4","w-[80px]"],["AUDJPYi,H4","w-[80px]"],["AUDNZDi,H4","w-[84px]"],["EURAUDi,H4","w-[84px]"],["GBPAUDi,H4","w-[80px]"],["EURCADi,H4","w-[84px]"],["GBPCHFi,H4","w-[80px]"]];

function Tabs() {
  return (
    <div className="relative h-[23px] shrink-0 bg-[#f0f0f0] border-t-2 border-white border-b border-b-white flex items-stretch text-[10.5px] tracking-[-0.15px]">
      {TABS.map(([t, w], i) => {
        const on = t === "GBPUSDi,H4";
        const sep = i !== 1 && i !== 2;
        return (
          <React.Fragment key={t}>
            <div className={`${w} shrink-0 flex items-center justify-center ${on ? "bg-white text-black border-x border-b border-black border-r-2 border-r-[#666]" : "text-[#66727e]"}`}>
              {t}
            </div>
            {sep && <span className="block w-px -ml-px self-center h-[13px] bg-[#888]" />}
          </React.Fragment>
        );
      })}
      <svg width="30" height="10" viewBox="0 0 30 10" className="absolute left-[1406px] top-[5px]" fill="#8a8a8a">
        <path d="M7 0v9L2 4.5zM21 0v9l5-4.5z" />
      </svg>
    </div>
  );
}

const ST: [string, string][] = [["","w-[713px]"],["XARD","w-[117px] pl-[4px]"],["2015.03.27 20:00","w-[100px] pl-[3px]"],["O: 1.48783","w-[71px] pl-[6px]"],["H: 1.49101","w-[71px] pl-[6px]"],["L: 1.48628","w-[68px] pl-[6px]"],["C: 1.48757","w-[71px] pl-[6px]"],["V: 18531","w-[66px] pl-[5px]"]];
function Status() {
  return (
    <div className="h-[18px] shrink-0 bg-[#f0f0f0] flex items-stretch text-[11.5px] text-[#1a1a1a] whitespace-nowrap">
      {ST.map(([t, w], i) => (
        <div key={i} className={`${w} shrink-0 flex items-center pt-[6px] ${i > 0 ? "border-l border-[#a0a0a0]" : ""}`}>{t}</div>
      ))}
      <div className="w-[66px] shrink-0 border-l border-[#a0a0a0] pl-[4px] flex items-center pt-[3px]">
        <svg width="24" height="13" viewBox="0 0 24 13" fill="#5a7a00" shapeRendering="crispEdges">
          {[0,3,6,9].map((x) => <rect key={x} x={x} y={1} width={2} height={12} />)}
          {[12,15,18,21].map((x) => <rect key={x} x={x} y={1} width={2} height={12} fill="#123a5a" />)}
        </svg>
      </div>
      <div className="flex-1 pl-[4px] pt-[6px] flex items-center">8211/5 kb</div>
    </div>
  );
}

export default function App() {
  return (
    <div className="w-[1440px] h-[860px] border-2 border-[#01a7d3] flex flex-col overflow-hidden font-['Liberation_Sans','Arial',sans-serif] text-[11px]">
      <TitleBar />
      <MenuBar />
      <Row1 />
      <Row2 />
      <Chart />
      <Tabs />
      <Status />
    </div>
  );
}
